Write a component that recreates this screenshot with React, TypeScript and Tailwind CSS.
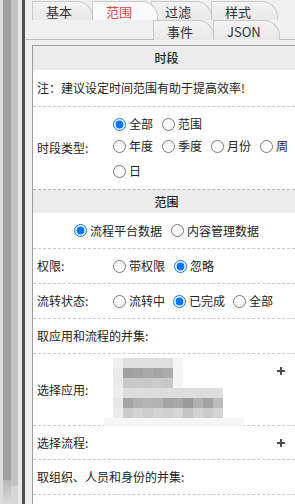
import React from "react";

const font = { fontFamily: '"Noto Sans CJK SC", "Noto Sans", sans-serif' };

function Radio({ label, checked }: { label: string; checked?: boolean }) {
  return (
    <label className="flex h-[22px] items-center whitespace-nowrap">
      <input
        type="radio"
        readOnly
        checked={!!checked}
        className="m-0 mr-[3px] h-[13px] w-[13px] accent-[#0075ff]"
      />
      <span>{label}</span>
    </label>
  );
}

function Plus() {
  return (
    <svg width="8" height="8" viewBox="0 0 8 8" className="shrink-0">
      <path d="M4 0v8M0 4h8" stroke="#4a4a4a" strokeWidth="2" />
    </svg>
  );
}

const mosaic: string[][] = [
  ["#f0f0f0", "#e0e0e0", "#e0e0e0", "#e0e0e0", "#e0e0e0", "#e0e0e0", "#f6f6f6"],
  ["#ebebeb", "#a0a0a0", "#a3a3a3", "#aaaaaa", "#a5a5a5", "#ababab", "#f5f5f5"],
  ["#ececec", "#c8c8c8", "#cacaca", "#c9c9c9", "#cbcbcb", "#c8c8c8", "#f5f5f5"],
  ["#eeeeee", "#dddddd", "#dddddd", "#dddddd", "#dddddd", "#dddddd", "#dddddd", "#dddddd", "#dddddd", "#dddddd", "#dddddd"],
  ["#e8e8e8", "#a5a5a5", "#b0b0b0", "#b5b5b5", "#b3b3b3", "#a5a5a5", "#a8a8a8", "#999999", "#b0b0b0", "#a2a2a2", "#bbbbbb"],
  ["#ececec", "#cccccc", "#d3d3d3", "#cdcdcd", "#d3d3d3", "#d0d0d0", "#d6d6d6", "#c5c5c5", "#d3d3d3", "#cccccc", "#d4d4d4"],
];

function BlurredApps() {
  return (
    <div className="-ml-[9px] mt-[4px] flex flex-col">
      {mosaic.map((row, i) => (
        <div key={i} className="ml-[9px] flex">
          {row.map((c, j) => (
            <div key={j} className="h-[10px] w-[10px]" style={{ background: c }} />
          ))}
        </div>
      ))}
      <div className="h-[8px] w-[140px] bg-[#f6f6f6]" />
    </div>
  );
}

function Tab({ label, active, w }: { label: string; active?: boolean; w: string }) {
  return (
    <div
      className={`${w} relative -ml-[1px] flex h-full items-center rounded-tr-[16px] border border-b-0 border-[#c9c9c9] pl-[13px] pt-[2px] ${
        active ? "z-10 bg-[#fafafa] text-[#cc4b4b]" : "bg-gradient-to-b from-[#f3f3f3] to-[#e9e9e9] text-[#333]"
      }`}
    >
      {label}
    </div>
  );
}

const row = "flex items-center border-b border-dashed border-[#c8c8c8]";

export default function App() {
  return (
    <div className="flex h-[504px] w-[295px] overflow-hidden bg-[#f0f0f0] text-[12px] text-[#222]" style={font}>
      {/* left frame strip */}
      <div className="flex h-full w-[25px] shrink-0">
        <div className="flex w-[3px] flex-col bg-[#dcdcdc]" />
        <div className="flex w-[8px] flex-col bg-[#a0a0a0]">
          <div className="mt-auto h-[24px] bg-gradient-to-b from-[#b8b8b8] to-[#dadada]" />
        </div>
        <div className="flex w-[7px] flex-col bg-[#c3c3c3]">
          <div className="mt-auto h-[18px] bg-[#d6d6d6]" />
        </div>
        <div className="w-[4px] bg-[#e8e8e8]" />
        <div className="w-[3px] bg-[#505050]" />
      </div>

      <div className="-mr-[5px] flex min-w-0 flex-1 flex-col">
        {/* tabs */}
        <div className="flex h-[40px] flex-col border-b border-[#bdbdbd] pl-[8px] text-[13px]">
          <div className="flex h-[20px] pt-[1px]">
            <Tab label="基本" w="w-[61px]" />
            <Tab label="范围" w="w-[66px] -mr-[6px]" active />
            <Tab label="过滤" w="w-[61px]" />
            <Tab label="样式" w="w-[67px]" />
          </div>
          <div className="flex h-[20px] pl-[121px]">
            <Tab label="事件" w="w-[61px]" />
            <Tab label="JSON" w="w-[67px]" />
          </div>
        </div>

        {/* panel */}
        <div className="ml-[7px] mt-[5px] flex flex-1 flex-col border-l border-t border-[#9c9c9c] bg-white">
          <div className="flex h-[24px] shrink-0 items-center justify-center bg-[#ececec] font-medium">时段</div>
          <div className={`${row} h-[37px] shrink-0 pl-[4px]`}>注：建议设定时间范围有助于提高效率!</div>
          <div className="flex h-[83px] shrink-0 items-center border-b border-dashed border-[#b4b4b4] pl-[4px]">
            <div className="w-[76px] shrink-0">时段类型:</div>
            <div className="flex flex-1 flex-col pb-[7px] pt-[6px]">
              <div className="flex gap-x-[9px]">
                <Radio label="全部" checked />
                <Radio label="范围" />
              </div>
              <div className="flex flex-wrap gap-x-[9px] gap-y-[3px]">
                <Radio label="年度" />
                <Radio label="季度" />
                <Radio label="月份" />
                <Radio label="周" />
                <Radio label="日" />
              </div>
            </div>
          </div>

          <div className="flex h-[23px] shrink-0 items-center justify-center bg-[#ececec] font-medium">范围</div>
          <div className={`${row} h-[36px] shrink-0 justify-center gap-x-[9px]`}>
            <Radio label="流程平台数据" checked />
            <Radio label="内容管理数据" />
          </div>
          <div className={`${row} h-[35px] shrink-0 pl-[4px]`}>
            <div className="w-[76px] shrink-0">权限:</div>
            <div className="flex gap-x-[9px]">
              <Radio label="带权限" />
              <Radio label="忽略" checked />
            </div>
          </div>
          <div className={`${row} h-[35px] shrink-0 pl-[4px]`}>
            <div className="w-[76px] shrink-0">流转状态:</div>
            <div className="flex gap-x-[8px]">
              <Radio label="流转中" />
              <Radio label="已完成" checked />
              <Radio label="全部" />
            </div>
          </div>
          <div className={`${row} h-[35px] shrink-0 pl-[4px]`}>取应用和流程的并集:</div>
          <div className="flex h-[72px] shrink-0 items-start border-b border-dashed border-[#c8c8c8] pl-[4px] pr-[15px]">
            <div className="w-[76px] shrink-0 self-center">选择应用:</div>
            <BlurredApps />
            <div className="ml-auto mt-[13px]">
              <Plus />
            </div>
          </div>
          <div className={`${row} h-[34px] shrink-0 pl-[4px] pr-[15px]`}>
            <div className="w-[76px] shrink-0">选择流程:</div>
            <div className="ml-auto">
              <Plus />
            </div>
          </div>
          <div className={`${row} h-[35px] shrink-0 pl-[4px]`}>取组织、人员和身份的并集:</div>
        </div>
      </div>
    </div>
  );
}
